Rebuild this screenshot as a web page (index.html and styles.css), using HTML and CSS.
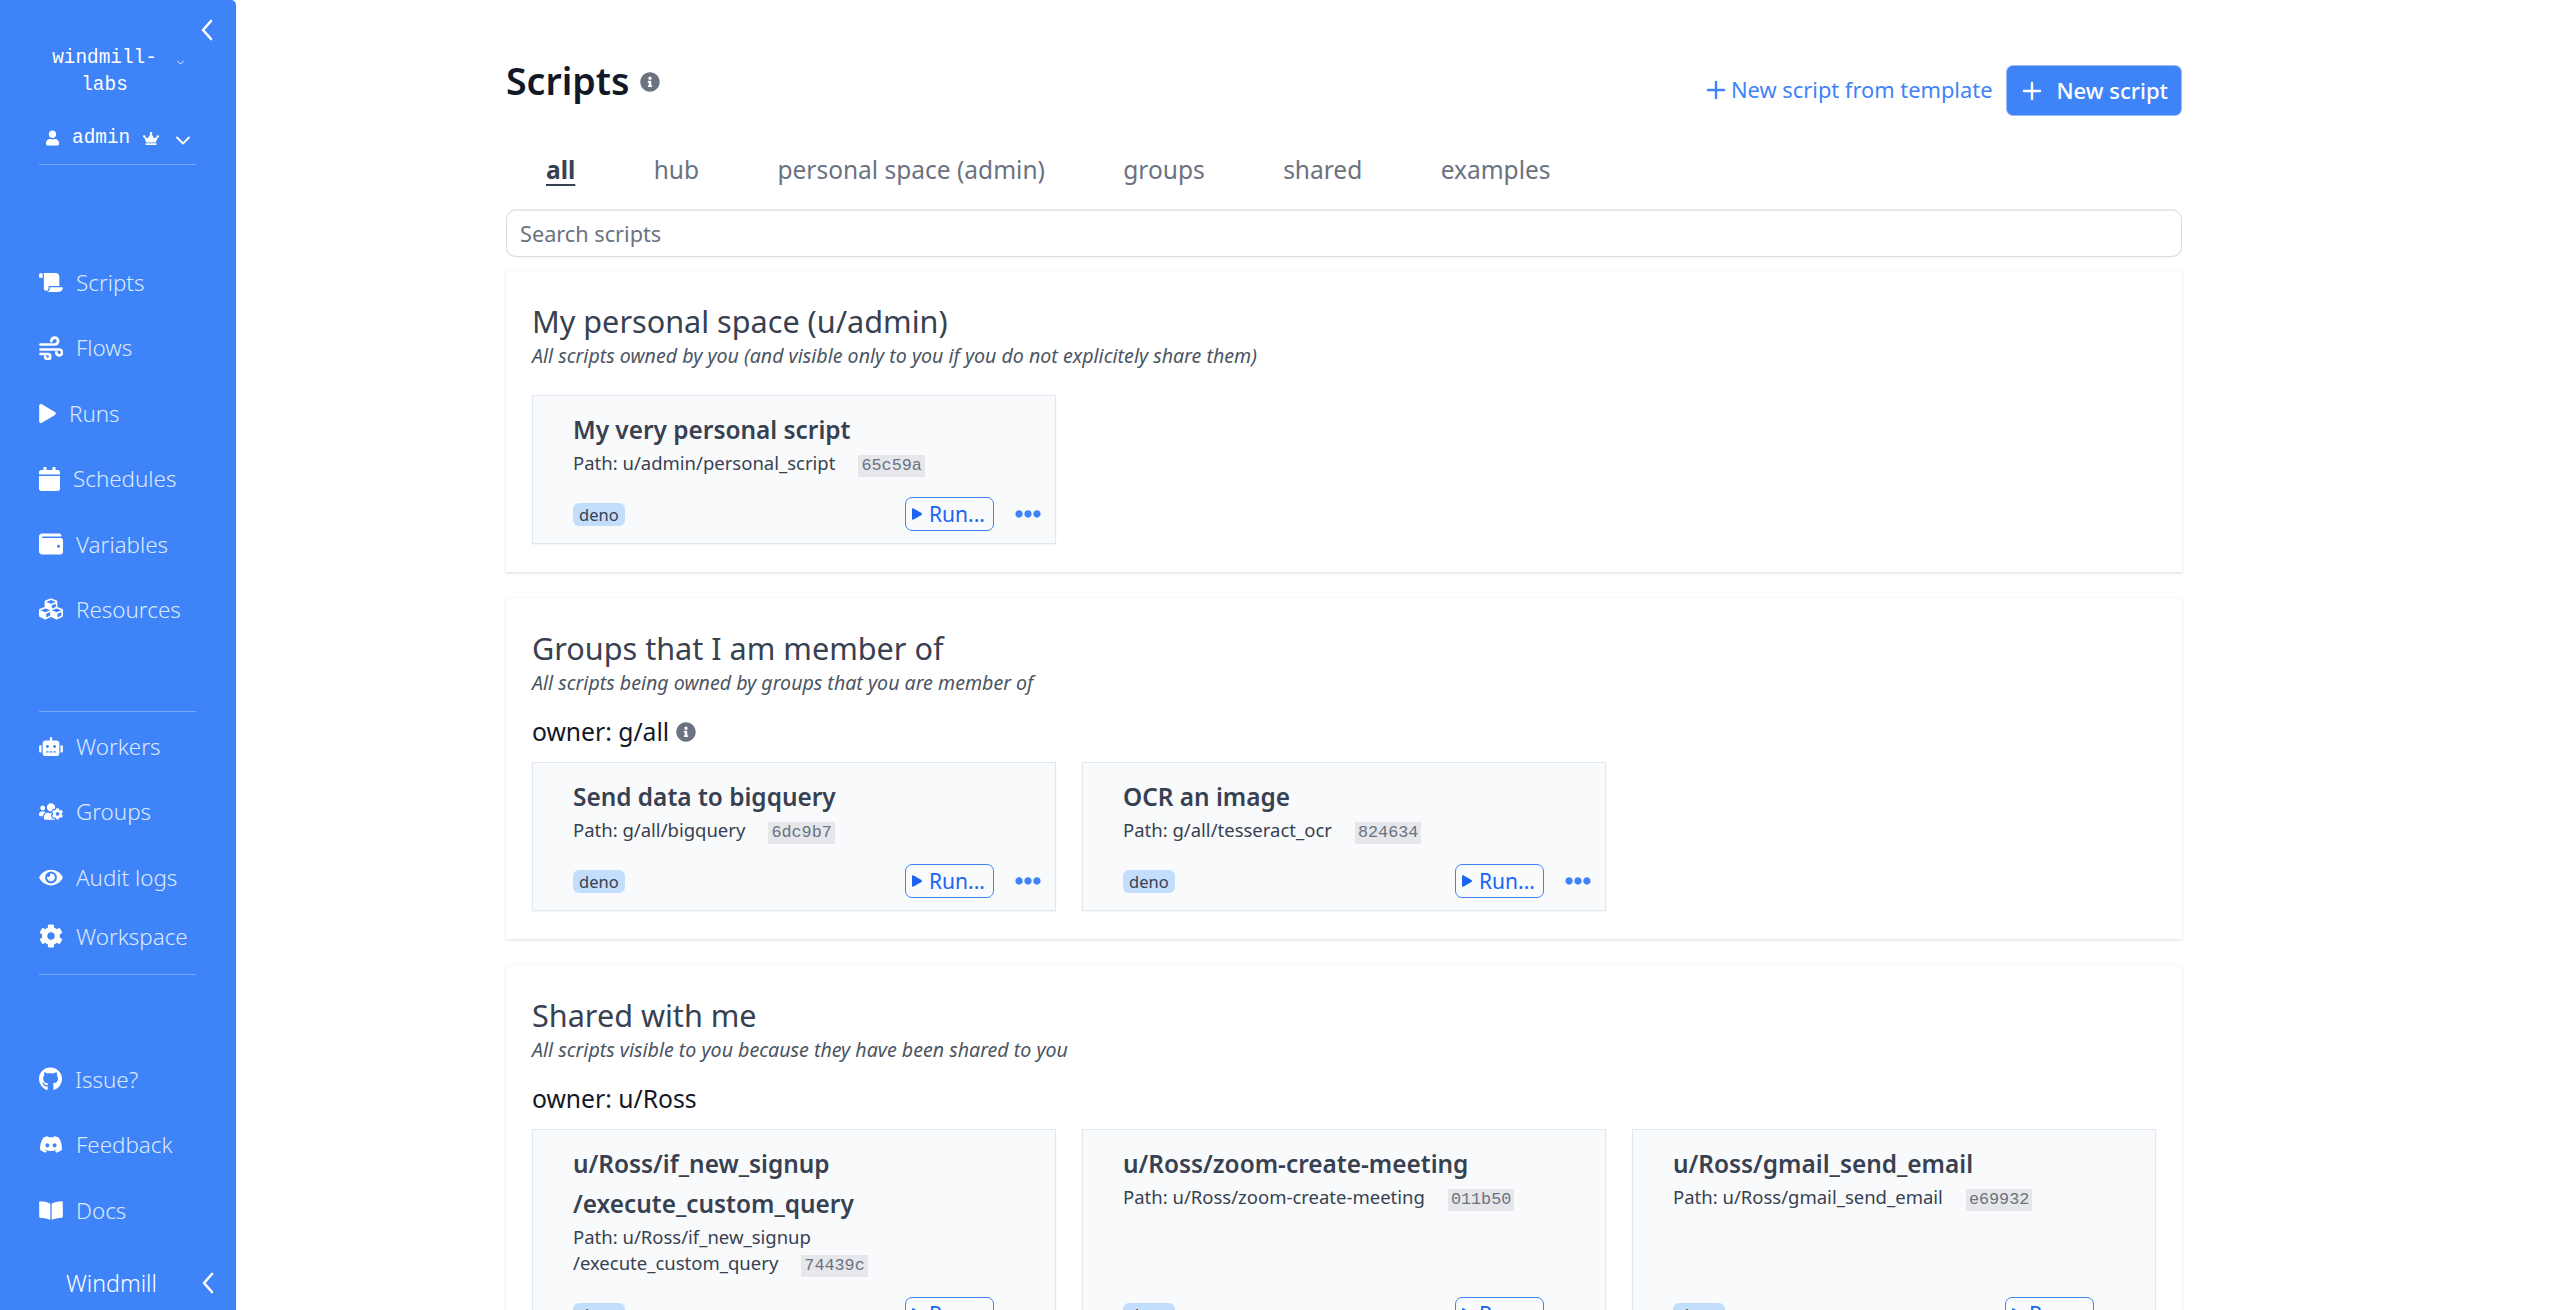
FILE: index.html
```html
<!DOCTYPE html>
<html>
<head>
  <title>Scripts | Windmill</title>
  <link rel="stylesheet" href="styles.css">
</head>
<body>
  <svg class="sprites" xmlns="http://www.w3.org/2000/svg">
    <symbol id="i-info" viewBox="0 0 512 512"><path d="M256 8C119.043 8 8 119.083 8 256c0 136.997 111.043 248 248 248s248-111.003 248-248C504 119.083 392.957 8 256 8zm0 110c23.196 0 42 18.804 42 42s-18.804 42-42 42-42-18.804-42-42 18.804-42 42-42zm56 254c0 6.627-5.373 12-12 12h-88c-6.627 0-12-5.373-12-12v-24c0-6.627 5.373-12 12-12h12v-64h-12c-6.627 0-12-5.373-12-12v-24c0-6.627 5.373-12 12-12h64c6.627 0 12 5.373 12 12v100h12c6.627 0 12 5.373 12 12v24z"/></symbol>
    <symbol id="i-play" viewBox="0 0 448 512"><path d="M424.4 214.7L72.4 6.6C43.8-10.3 0 6.1 0 47.9V464c0 37.5 40.7 60.1 72.4 41.3l352-208c31.4-18.5 31.5-64.1 0-82.6z"/></symbol>
    <symbol id="i-dots" viewBox="0 0 512 512"><path d="M328 256c0 39.8-32.2 72-72 72s-72-32.2-72-72 32.2-72 72-72 72 32.2 72 72zm104-72c-39.8 0-72 32.2-72 72s32.2 72 72 72 72-32.2 72-72-32.2-72-72-72zm-352 0c-39.8 0-72 32.2-72 72s32.2 72 72 72 72-32.2 72-72-32.2-72-72-72z"/></symbol>
    <symbol id="i-back" viewBox="0 0 12 22"><path d="M10 2L2 11l8 9" fill="none" stroke="currentColor" stroke-width="2.6" stroke-linecap="round" stroke-linejoin="round"/></symbol>
    <symbol id="i-plus" viewBox="0 0 20 20"><path d="M10 2v16M2 10h16" fill="none" stroke="currentColor" stroke-width="2.4" stroke-linecap="round"/></symbol>
    <symbol id="i-down" viewBox="0 0 14 9"><path d="M1 1.5l6 6 6-6" fill="none" stroke="currentColor" stroke-width="1.8" stroke-linecap="round" stroke-linejoin="round"/></symbol>
  </svg>

  <div class="app">
    <aside class="sidebar">
      <div class="toggle-row"><svg class="back-icon" width="12" height="22"><use href="#i-back"/></svg></div>

      <div class="workspace-row">
        <div class="workspace-name">windmill-labs</div>
        <svg class="tiny-down" width="7" height="5"><use href="#i-down"/></svg>
      </div>

      <div class="user-row">
        <svg width="13" height="16" viewBox="0 0 448 512"><path d="M224 256c70.7 0 128-57.3 128-128S294.7 0 224 0 96 57.3 96 128s57.3 128 128 128zm89.6 32h-16.7c-22.2 10.2-46.9 16-72.9 16s-50.6-5.8-72.9-16h-16.7C60.2 288 0 348.2 0 422.4V464c0 26.5 21.5 48 48 48h352c26.5 0 48-21.5 48-48v-41.6c0-74.2-60.2-134.4-134.4-134.4z"/></svg>
        <span class="user-name">admin</span>
        <svg width="16" height="13" viewBox="0 0 640 512"><path d="M528 448H112c-8.8 0-16 7.2-16 16v32c0 8.8 7.2 16 16 16h416c8.8 0 16-7.2 16-16v-32c0-8.8-7.2-16-16-16zm64-320c-26.5 0-48 21.5-48 48 0 7.1 1.6 13.7 4.4 19.8L476 239.2c-15.4 9.2-35.3 4-44.2-11.6L350.3 85C361 76.2 368 63 368 48c0-26.5-21.5-48-48-48s-48 21.5-48 48c0 15 7 28.2 17.7 37l-81.5 142.6c-8.9 15.6-28.9 20.8-44.2 11.6l-72.3-43.4c2.7-6 4.4-12.7 4.4-19.8 0-26.5-21.5-48-48-48S0 149.5 0 176s21.5 48 48 48c2.6 0 5.2-.4 7.7-.8L128 416h384l72.3-192.8c2.5.4 5.1.8 7.7.8 26.5 0 48-21.5 48-48s-21.5-48-48-48z"/></svg>
        <svg class="user-down" width="14" height="9"><use href="#i-down"/></svg>
      </div>
      <hr class="side-rule">

      <nav class="nav-list nav-main">
        <a class="nav-item"><svg width="24" height="19" viewBox="0 0 640 512"><path d="M48 0C21.53 0 0 21.53 0 48v64c0 8.84 7.16 16 16 16h80V48C96 21.53 74.47 0 48 0zm208 412.57V352h288V96c0-52.94-43.06-96-96-96H111.59C121.74 13.41 128 29.92 128 48v368c0 38.87 34.65 69.65 74.75 63.12C234.22 474 256 444.46 256 412.57zM288 384v32c0 52.93-43.06 96-96 96h336c61.86 0 112-50.14 112-112 0-8.84-7.16-16-16-16H288z"/></svg>Scripts</a>
        <a class="nav-item"><svg width="24" height="24" viewBox="0 0 24 24"><path d="M1.5 8.5h14.2a3.4 3.4 0 1 0-3.4-3.4M1.5 13.5h18.7a2.9 2.9 0 1 1-2.9 2.9M1.5 18h7.2a2.6 2.6 0 1 1-2.6 2.6" fill="none" stroke="currentColor" stroke-width="2.7" stroke-linecap="round"/></svg>Flows</a>
        <a class="nav-item"><svg width="17" height="19"><use href="#i-play"/></svg>Runs</a>
        <a class="nav-item"><svg width="21" height="24" viewBox="0 0 448 512"><path d="M12 192h424c6.6 0 12 5.4 12 12v260c0 26.5-21.5 48-48 48H48c-26.5 0-48-21.5-48-48V204c0-6.6 5.4-12 12-12zm436-44v-36c0-26.5-21.5-48-48-48h-48V12c0-6.6-5.4-12-12-12h-40c-6.6 0-12 5.4-12 12v52H160V12c0-6.6-5.4-12-12-12h-40c-6.6 0-12 5.4-12 12v52H48C21.5 64 0 85.5 0 112v36c0 6.6 5.4 12 12 12h424c6.6 0 12-5.4 12-12z"/></svg>Schedules</a>
        <a class="nav-item"><svg width="24" height="24" viewBox="0 0 512 512"><path d="M461.2 128H80c-8.84 0-16-7.16-16-16s7.16-16 16-16h384c8.84 0 16-7.16 16-16 0-26.51-21.49-48-48-48H64C28.65 32 0 60.65 0 96v320c0 35.35 28.65 64 64 64h397.2c28.02 0 50.8-21.53 50.8-48V176c0-26.47-22.78-48-50.8-48zM416 336c-17.67 0-32-14.33-32-32s14.33-32 32-32 32 14.33 32 32-14.33 32-32 32z"/></svg>Variables</a>
        <a class="nav-item"><svg width="24" height="24" viewBox="0 0 512 512"><path d="M488.6 250.2L392 214V105.5c0-15-9.3-28.4-23.4-33.7l-100-37.5c-8.1-3.1-17.1-3.1-25.3 0l-100 37.5c-14.1 5.3-23.4 18.7-23.4 33.7V214l-96.6 36.2C9.3 255.5 0 268.9 0 283.9V394c0 13.6 7.7 26.1 19.9 32.2l100 50c10.1 5.1 22.1 5.1 32.2 0l103.9-52 103.9 52c10.1 5.1 22.1 5.1 32.2 0l100-50c12.2-6.1 19.9-18.6 19.9-32.2V283.9c0-15-9.3-28.4-23.4-33.7zM358 214.8l-85 31.9v-68.2l85-37v73.3zM154 104.1l102-38.2 102 38.2v.6l-102 41.4-102-41.4v-.6zm84 291.1l-85 42.5v-79.1l85-38.8v75.4zm0-112l-102 41.4-102-41.4v-.6l102-38.2 102 38.2v.6zm240 112l-85 42.5v-79.1l85-38.8v75.4zm0-112l-102 41.4-102-41.4v-.6l102-38.2 102 38.2v.6z"/></svg>Resources</a>
      </nav>
      <hr class="side-rule rule-mid">

      <nav class="nav-list nav-admin">
        <a class="nav-item"><svg width="24" height="19" viewBox="0 0 640 512"><path d="M32,224H64V416H32A31.96166,31.96166,0,0,1,0,384V256A31.96166,31.96166,0,0,1,32,224Zm512-48V448a64.06328,64.06328,0,0,1-64,64H160a64.06328,64.06328,0,0,1-64-64V176a79.974,79.974,0,0,1,80-80H288V32a32,32,0,0,1,64,0V96H464A79.974,79.974,0,0,1,544,176ZM264,256a40,40,0,1,0-40,40A39.997,39.997,0,0,0,264,256Zm-8,128H192v32h64Zm96,0H288v32h64ZM456,256a40,40,0,1,0-40,40A39.997,39.997,0,0,0,456,256Zm-8,128H384v32h64ZM640,256V384a31.96166,31.96166,0,0,1-32,32H576V224h32A31.96166,31.96166,0,0,1,640,256Z"/></svg>Workers</a>
        <a class="nav-item"><svg width="24" height="19" viewBox="0 0 640 512"><path d="M610.5 341.3c2.6-14.1 2.6-28.5 0-42.6l25.8-14.9c3-1.7 4.3-5.2 3.3-8.5-6.7-21.6-18.2-41.2-33.2-57.4-2.3-2.5-6-3.1-9-1.4l-25.8 14.9c-10.9-9.3-23.4-16.5-36.9-21.3v-29.8c0-3.4-2.4-6.4-5.7-7.1-22.3-5-45-4.8-66.2 0-3.3.7-5.7 3.7-5.7 7.1v29.8c-13.5 4.8-26 12-36.9 21.3l-25.8-14.9c-2.9-1.7-6.7-1.1-9 1.4-15 16.2-26.5 35.8-33.2 57.4-1 3.3.4 6.8 3.3 8.5l25.8 14.9c-2.6 14.1-2.6 28.5 0 42.6l-25.8 14.9c-3 1.7-4.3 5.2-3.3 8.5 6.7 21.6 18.2 41.1 33.2 57.4 2.3 2.5 6 3.1 9 1.4l25.8-14.9c10.9 9.3 23.4 16.5 36.9 21.3v29.8c0 3.4 2.4 6.4 5.7 7.1 22.3 5 45 4.8 66.2 0 3.3-.7 5.7-3.7 5.7-7.1v-29.8c13.5-4.8 26-12 36.9-21.3l25.8 14.9c2.9 1.7 6.7 1.1 9-1.4 15-16.2 26.5-35.8 33.2-57.4 1-3.3-.4-6.8-3.3-8.5l-25.8-14.9zM496 368.5c-26.8 0-48.5-21.8-48.5-48.5s21.8-48.5 48.5-48.5 48.5 21.8 48.5 48.5-21.7 48.5-48.5 48.5zM96 224c35.3 0 64-28.7 64-64s-28.7-64-64-64-64 28.7-64 64 28.7 64 64 64zm224 32c1.9 0 3.7-.5 5.6-.6 8.3-21.7 20.5-42.1 36.3-59.2 7.4-8 17.9-12.6 28.9-12.6 6.9 0 13.7 1.8 19.6 5.3l7.9 4.6c.8-.5 1.6-.9 2.4-1.4 7-14.6 11.2-30.8 11.2-48 0-61.9-50.1-112-112-112S208 82.1 208 144c0 61.9 50.1 112 112 112zm105.2 194.5c-2.3-1.2-4.6-2.6-6.8-3.9-8.2 4.8-15.3 9.8-27.5 9.8-10.9 0-21.4-4.6-28.9-12.6-18.3-19.8-32.3-43.9-40.2-69.6-10.7-34.5 24.9-49.7 25.8-50.3-.1-2.6-.1-5.2 0-7.8l-7.9-4.6c-3.8-2.2-7-5-9.8-8.1-3.3.2-6.5.6-9.8.6-24.6 0-47.6-6-68.5-16h-8.3C179.6 288 128 339.6 128 403.2V432c0 26.5 21.5 48 48 48h255.4c-3.7-6-6.2-12.8-6.2-20.3v-9.2zM173.1 274.6C161.5 263.1 145.6 256 128 256H64c-35.3 0-64 28.7-64 64v32c0 17.7 14.3 32 32 32h65.9c6.3-47.4 34.9-87.3 75.2-109.4z"/></svg>Groups</a>
        <a class="nav-item"><svg width="24" height="21" viewBox="0 0 576 512"><path d="M572.52 241.4C518.29 135.59 410.93 64 288 64S57.68 135.64 3.48 241.41a32.35 32.35 0 0 0 0 29.19C57.71 376.41 165.07 448 288 448s230.32-71.64 284.52-177.41a32.35 32.35 0 0 0 0-29.19zM288 400a144 144 0 1 1 144-144 143.93 143.93 0 0 1-144 144zm0-240a95.31 95.31 0 0 0-25.31 3.79 47.85 47.85 0 0 1-66.9 66.9A95.78 95.78 0 1 0 288 160z"/></svg>Audit logs</a>
        <a class="nav-item"><svg width="24" height="24" viewBox="0 0 512 512"><path d="M487.4 315.7l-42.6-24.6c4.3-23.2 4.3-47 0-70.2l42.6-24.6c4.9-2.8 7.1-8.6 5.5-14-11.1-35.6-30-67.8-54.7-94.6-3.8-4.1-10-5.1-14.8-2.3L380.8 110c-17.9-15.4-38.5-27.3-60.8-35.1V25.8c0-5.6-3.9-10.5-9.4-11.7-36.7-8.2-74.3-7.8-109.2 0-5.5 1.2-9.4 6.1-9.4 11.7V75c-22.2 7.9-42.8 19.8-60.8 35.1L88.7 85.5c-4.9-2.8-11-1.9-14.8 2.3-24.7 26.7-43.6 58.9-54.7 94.6-1.7 5.4.6 11.2 5.5 14L67.3 221c-4.3 23.2-4.3 47 0 70.2l-42.6 24.6c-4.9 2.8-7.1 8.6-5.5 14 11.1 35.6 30 67.8 54.7 94.6 3.8 4.1 10 5.1 14.8 2.3l42.6-24.6c17.9 15.4 38.5 27.3 60.8 35.1v49.2c0 5.6 3.9 10.5 9.4 11.7 36.7 8.2 74.3 7.8 109.2 0 5.5-1.2 9.4-6.1 9.4-11.7v-49.2c22.2-7.9 42.8-19.8 60.8-35.1l42.6 24.6c4.9 2.8 11 1.9 14.8-2.3 24.7-26.7 43.6-58.9 54.7-94.6 1.5-5.5-.7-11.3-5.6-14.1zM256 336c-44.1 0-80-35.9-80-80s35.9-80 80-80 80 35.9 80 80-35.9 80-80 80z"/></svg>Workspace</a>
      </nav>
      <hr class="side-rule rule-low">

      <nav class="nav-list nav-links">
        <a class="nav-item"><svg width="23" height="24" viewBox="0 0 496 512"><path d="M165.9 397.4c0 2-2.3 3.6-5.2 3.6-3.3 0-5.6-1.6-5.6-3.6 0-2 2.3-3.6 5.2-3.6 3-.3 5.6 1.3 5.6 3.6zm-31.1-4.5c-.7 2 1.3 4.3 4.3 4.9 2.6 1 5.6 0 6.2-2s-1.3-4.3-4.3-5.2c-2.6-.7-5.5.3-6.2 2.3zm44.2-1.7c-2.9.7-4.9 2.6-4.6 4.9.3 2 2.9 3.3 5.9 2.6 2.9-.7 4.9-2.6 4.6-4.6-.3-1.9-3-3.2-5.9-2.9zM244.8 8C106.1 8 0 113.3 0 252c0 110.9 69.8 205.8 169.5 239.2 12.8 2.3 17.3-5.6 17.3-12.1 0-6.2-.3-40.4-.3-61.4 0 0-70 15-84.7-29.8 0 0-11.4-29.1-27.8-36.6 0 0-22.9-15.7 1.6-16 0 0 24.9 2 38.6 25.8 21.9 38.6 58.6 27.5 72.9 20.9 2.3-16 8.8-27.1 16-33.7-55.9-6.2-112.3-14.3-112.3-110.5 0-27.5 7.6-41.3 23.6-58.9-2.6-6.5-11.1-33.3 2.6-67.9 20.9-6.5 69 27 69 27 20-5.6 41.5-8.5 62.8-8.5s42.8 2.9 62.8 8.5c0 0 48.1-33.6 69-27 13.7 34.7 5.2 61.4 2.6 67.9 16 17.7 25.8 31.5 25.8 58.9 0 96.5-58.9 104.2-114.8 110.5 9.2 7.9 17 22.9 17 46.4 0 33.7-.3 75.4-.3 83.6 0 6.5 4.6 14.4 17.3 12.1C428.2 457.8 496 362.9 496 252 496 113.3 383.5 8 244.8 8z"/></svg>Issue?</a>
        <a class="nav-item"><svg width="24" height="19" viewBox="0 0 640 512"><path d="M524.531,69.836a1.5,1.5,0,0,0-.764-.7A485.065,485.065,0,0,0,404.081,32.03a1.816,1.816,0,0,0-1.923.91,337.461,337.461,0,0,0-14.9,30.6,447.848,447.848,0,0,0-134.426,0,309.541,309.541,0,0,0-15.135-30.6,1.89,1.89,0,0,0-1.924-.91A483.689,483.689,0,0,0,116.085,69.137a1.712,1.712,0,0,0-.788.676C39.068,183.651,18.186,294.69,28.43,404.354a2.016,2.016,0,0,0,.765,1.375A487.666,487.666,0,0,0,176.02,479.918a1.9,1.9,0,0,0,2.063-.676A348.2,348.2,0,0,0,208.12,430.4a1.86,1.86,0,0,0-1.019-2.588,321.173,321.173,0,0,1-45.868-21.853,1.885,1.885,0,0,1-.185-3.126c3.082-2.309,6.166-4.711,9.109-7.137a1.819,1.819,0,0,1,1.9-.256c96.229,43.917,200.41,43.917,295.5,0a1.812,1.812,0,0,1,1.924.233c2.944,2.426,6.027,4.851,9.132,7.16a1.884,1.884,0,0,1-.162,3.126,301.407,301.407,0,0,1-45.89,21.83,1.875,1.875,0,0,0-1,2.611,391.055,391.055,0,0,0,30.014,48.815,1.864,1.864,0,0,0,2.063.7A486.048,486.048,0,0,0,610.7,405.729a1.882,1.882,0,0,0,.765-1.352C623.729,277.594,590.933,167.465,524.531,69.836ZM222.491,337.58c-28.972,0-52.844-26.587-52.844-59.239S193.056,219.1,222.491,219.1c29.665,0,53.306,26.82,52.843,59.239C275.334,310.993,251.924,337.58,222.491,337.58Zm195.38,0c-28.971,0-52.843-26.587-52.843-59.239S388.437,219.1,417.871,219.1c29.667,0,53.307,26.82,52.844,59.239C470.715,310.993,447.538,337.58,417.871,337.58Z"/></svg>Feedback</a>
        <a class="nav-item"><svg width="24" height="21" viewBox="0 0 576 512"><path d="M542.22 32.05c-54.8 3.11-163.72 14.43-230.96 55.59-4.64 2.84-7.27 7.89-7.27 13.17v363.87c0 11.55 12.63 18.85 23.28 13.49 69.18-34.82 169.23-44.32 218.7-46.92 16.89-.89 30.02-14.43 30.02-30.66V62.75c.01-17.71-15.35-31.74-33.77-30.7zM264.73 87.64C197.5 46.48 88.58 35.17 33.78 32.05 15.36 31.01 0 45.04 0 62.75V400.6c0 16.24 13.13 29.78 30.02 30.66 49.49 2.6 149.59 12.11 218.77 46.95 10.62 5.35 23.21-1.94 23.21-13.46V100.63c0-5.29-2.62-10.14-7.27-12.99z"/></svg>Docs</a>
      </nav>

      <div class="side-footer">
        <span class="brand">Windmill</span>
        <svg class="back-icon" width="12" height="22"><use href="#i-back"/></svg>
      </div>
    </aside>

    <main class="content">
      <header class="page-head">
        <h1 class="page-title">Scripts <svg class="info-icon" width="20" height="20"><use href="#i-info"/></svg></h1>
        <div class="head-actions">
          <a class="link-btn"><svg width="20" height="20"><use href="#i-plus"/></svg>New script from template</a>
          <a class="primary-btn"><svg width="20" height="20"><use href="#i-plus"/></svg>New script</a>
        </div>
      </header>

      <div class="tabs">
        <a class="tab tab-active">all</a>
        <a class="tab">hub</a>
        <a class="tab">personal space (admin)</a>
        <a class="tab">groups</a>
        <a class="tab">shared</a>
        <a class="tab">examples</a>
      </div>

      <input class="search" type="text" placeholder="Search scripts">

      <section class="panel">
        <h2 class="panel-title">My personal space (u/admin)</h2>
        <p class="panel-note">All scripts owned by you (and visible only to you if you do not explicitely share them)</p>
        <div class="card-grid">
          <div class="card">
            <h3 class="card-title">My very personal script</h3>
            <p class="card-path">Path: u/admin/personal_script<code class="hash">65c59a</code></p>
            <div class="card-foot">
              <span class="badge">deno</span>
              <a class="run-btn"><svg width="10" height="14"><use href="#i-play"/></svg>Run...</a>
              <svg class="dots" width="26" height="26"><use href="#i-dots"/></svg>
            </div>
          </div>
        </div>
      </section>

      <section class="panel">
        <h2 class="panel-title">Groups that I am member of</h2>
        <p class="panel-note">All scripts being owned by groups that you are member of</p>
        <h4 class="owner">owner: g/all <svg class="info-icon" width="20" height="20"><use href="#i-info"/></svg></h4>
        <div class="card-grid">
          <div class="card">
            <h3 class="card-title">Send data to bigquery</h3>
            <p class="card-path">Path: g/all/bigquery<code class="hash">6dc9b7</code></p>
            <div class="card-foot">
              <span class="badge">deno</span>
              <a class="run-btn"><svg width="10" height="14"><use href="#i-play"/></svg>Run...</a>
              <svg class="dots" width="26" height="26"><use href="#i-dots"/></svg>
            </div>
          </div>
          <div class="card">
            <h3 class="card-title">OCR an image</h3>
            <p class="card-path">Path: g/all/tesseract_ocr<code class="hash">824634</code></p>
            <div class="card-foot">
              <span class="badge">deno</span>
              <a class="run-btn"><svg width="10" height="14"><use href="#i-play"/></svg>Run...</a>
              <svg class="dots" width="26" height="26"><use href="#i-dots"/></svg>
            </div>
          </div>
        </div>
      </section>

      <section class="panel">
        <h2 class="panel-title">Shared with me</h2>
        <p class="panel-note">All scripts visible to you because they have been shared to you</p>
        <h4 class="owner">owner: u/Ross</h4>
        <div class="card-grid">
          <div class="card">
            <h3 class="card-title">u/Ross/if_new_signup<br>/execute_custom_query</h3>
            <p class="card-path">Path: u/Ross/if_new_signup<br>/execute_custom_query<code class="hash">74439c</code></p>
            <div class="card-foot">
              <span class="badge">deno</span>
              <a class="run-btn"><svg width="10" height="14"><use href="#i-play"/></svg>Run...</a>
              <svg class="dots" width="26" height="26"><use href="#i-dots"/></svg>
            </div>
          </div>
          <div class="card">
            <h3 class="card-title">u/Ross/zoom-create-meeting</h3>
            <p class="card-path">Path: u/Ross/zoom-create-meeting<code class="hash">011b50</code></p>
            <div class="card-foot">
              <span class="badge">deno</span>
              <a class="run-btn"><svg width="10" height="14"><use href="#i-play"/></svg>Run...</a>
              <svg class="dots" width="26" height="26"><use href="#i-dots"/></svg>
            </div>
          </div>
          <div class="card">
            <h3 class="card-title">u/Ross/gmail_send_email</h3>
            <p class="card-path">Path: u/Ross/gmail_send_email<code class="hash">e69932</code></p>
            <div class="card-foot">
              <span class="badge">deno</span>
              <a class="run-btn"><svg width="10" height="14"><use href="#i-play"/></svg>Run...</a>
              <svg class="dots" width="26" height="26"><use href="#i-dots"/></svg>
            </div>
          </div>
        </div>
      </section>
    </main>
  </div>
</body>
</html>
```

FILE: styles.css
```css
html, body {
  margin: 0;
  height: 100%;
  overflow: hidden;
  background: #fff;
  font-family: "Noto Sans", sans-serif;
  color: #111827;
}
svg {
  fill: currentColor;
  flex-shrink: 0;
}
.sprites {
  display: none;
}
.app {
  display: flex;
  height: 100vh;
  overflow: hidden;
}

/* sidebar */
.sidebar {
  width: 236px;
  flex-shrink: 0;
  box-sizing: border-box;
  display: flex;
  flex-direction: column;
  padding: 0 0 0 39px;
  background: #3f83f8;
  border-top-right-radius: 5px;
  color: #fff;
}
.toggle-row {
  display: flex;
  justify-content: flex-end;
  padding: 19px 23px 0 0;
  height: 22px;
  margin-bottom: 4px;
}
.back-icon {
  display: block;
}
.workspace-row {
  display: flex;
  align-items: flex-start;
}
.workspace-name {
  width: 131px;
  text-align: center;
  font-family: "Liberation Mono", monospace;
  font-size: 19.4px;
  line-height: 27px;
}
.tiny-down {
  margin: 15px 0 0 7px;
}
.user-row {
  display: flex;
  align-items: center;
  height: 26px;
  margin-top: 26px;
  padding-left: 7px;
  font-family: "Liberation Mono", monospace;
  font-size: 19.4px;
}
.user-name {
  margin: 0 13px;
}
.user-down {
  margin: 5px 0 0 17px;
}
.side-rule {
  width: 157px;
  margin: 13px 0 0;
  border: 0;
  border-top: 1px solid rgba(255, 255, 255, 0.3);
}
.rule-mid {
  margin-top: 72px;
}
.rule-low {
  margin-top: 8px;
}
.nav-list {
  display: flex;
  flex-direction: column;
}
.nav-main {
  margin-top: 88px;
}
.nav-admin {
  margin-top: 5px;
}
.nav-admin .nav-item:last-child {
  margin-top: -6.4px;
}
.nav-links {
  margin-top: 75px;
}
.nav-item {
  display: flex;
  align-items: center;
  gap: 13px;
  height: 59px;
  margin-bottom: 6.4px;
  font-size: 22.4px;
  font-weight: 300;
  color: #dde9fd;
}
.nav-item:last-child {
  margin-bottom: 0;
}
.nav-item svg {
  color: #fff;
}
.side-footer {
  display: flex;
  align-items: center;
  margin-top: auto;
  height: 30px;
  padding: 0 0 12px 27px;
}
.brand {
  font-size: 23.2px;
  font-weight: 300;
  margin-right: 45px;
}

/* main column */
.content {
  width: 1676px;
  flex-shrink: 0;
  margin-left: 270px;
}
.page-head {
  display: flex;
  justify-content: space-between;
  padding-top: 65px;
  height: 51px;
}
.page-title {
  display: flex;
  align-items: center;
  margin: -10px 0 0;
  height: 50px;
  font-size: 37.5px;
  font-weight: 600;
  color: #111827;
}
.page-title .info-icon {
  margin-top: 4px;
}
.info-icon {
  color: #6b7280;
  margin-left: 10px;
}
.head-actions {
  display: flex;
  align-items: center;
  gap: 14px;
}
.link-btn {
  display: flex;
  align-items: center;
  gap: 5px;
  padding: 0 0 2px 3px;
  font-size: 21.85px;
  color: #3f83f8;
}
.primary-btn {
  display: flex;
  align-items: center;
  gap: 14px;
  box-sizing: border-box;
  height: 51px;
  padding: 0 13px 2px 15px;
  background: #3f83f8;
  border: 1px solid #9cbdf5;
  border-radius: 7px;
  font-size: 22px;
  font-weight: 500;
  color: #fff;
}
.primary-btn svg {
  margin-top: 2px;
}
.tabs {
  display: flex;
  margin-top: 36px;
  padding-bottom: 2px;
  height: 36px;
}
.tab {
  padding: 0 39.2px;
  font-size: 24.5px;
  line-height: 36px;
  color: #6b7280;
}
.tab:first-child {
  padding-left: 40px;
}
.tab-active {
  font-weight: 700;
  color: #374151;
  text-decoration: underline;
  text-underline-offset: 5px;
}
.search {
  display: block;
  box-sizing: border-box;
  width: 100%;
  height: 48px;
  margin-top: 19px;
  padding: 0 13px;
  border: 1px solid #d9dce1;
  border-top: 2px solid #e7e8ec;
  border-radius: 10px;
  font-family: inherit;
  font-size: 21.7px;
  outline: none;
  box-shadow: 0 1px 2px rgba(0, 0, 0, 0.05);
}
.search::placeholder {
  color: #6b7280;
  opacity: 1;
}

/* sections */
.panel {
  margin-top: 14px;
  padding: 28px 26px 28px;
  background: #fff;
  box-shadow: 0 1px 3px rgba(0, 0, 0, 0.14);
}
.panel + .panel {
  margin-top: 26px;
}
.panel-title {
  margin: 0;
  font-size: 30.6px;
  font-weight: 400;
  line-height: 44px;
  color: #374151;
}
.panel-note {
  margin: 0 0 26px;
  font-size: 19.6px;
  font-style: italic;
  line-height: 26px;
  color: #4b5563;
}
.owner {
  display: flex;
  align-items: center;
  margin: -10px 0 12px;
  height: 38px;
  font-size: 24.7px;
  font-weight: 400;
  color: #111827;
}
.owner .info-icon {
  margin: 2px 0 0 7px;
}
.card-grid {
  display: grid;
  grid-template-columns: repeat(3, 524px);
  gap: 26px;
}
.card {
  display: flex;
  flex-direction: column;
  box-sizing: border-box;
  min-height: 148px;
  padding: 14px 14px 12px 40px;
  background: #f9fafb;
  border: 1px solid #e1e7f0;
  box-shadow: 0 1px 2px rgba(0, 0, 0, 0.05);
}
.card-title {
  margin: 0;
  font-size: 24.4px;
  font-weight: 600;
  line-height: 40px;
  color: #374151;
}
.card-path {
  margin: 0;
  font-size: 18.5px;
  line-height: 26px;
  color: #374151;
}
.hash {
  display: inline-block;
  margin-left: 23px;
  padding: 0 3px;
  font-family: "Liberation Mono", monospace;
  font-size: 16.8px;
  line-height: 22px;
  background: #e5e7eb;
  color: #6b7280;
}
.card-foot {
  display: flex;
  align-items: center;
  margin-top: auto;
  padding-top: 20px;
}
.badge {
  padding: 0 6px;
  height: 23px;
  margin-right: auto;
  font-size: 16.5px;
  line-height: 23px;
  border-radius: 6px;
  background: #c3ddfd;
  color: #374151;
}
.run-btn {
  display: flex;
  align-items: center;
  gap: 7px;
  box-sizing: border-box;
  width: 89px;
  height: 34px;
  padding-left: 6px;
  border: 1px solid #3f83f8;
  border-radius: 7px;
  font-size: 21px;
  color: #1c64f2;
}
.run-btn svg {
  color: #1c64f2;
}
.dots {
  margin-left: 21px;
  color: #3f83f8;
}
```
